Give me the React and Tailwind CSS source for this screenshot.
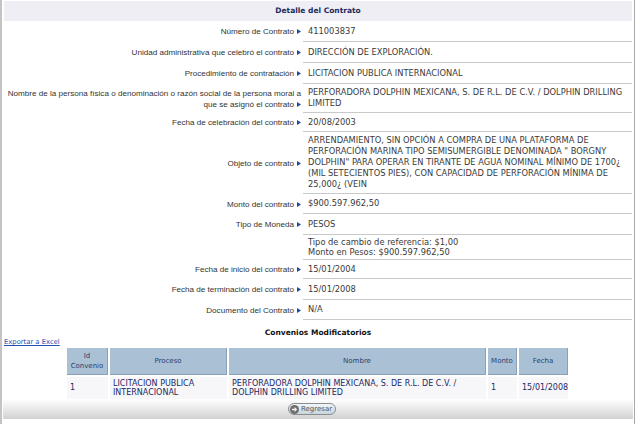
import React from "react";

const Arrow = () => (
  <svg width="4" height="5" viewBox="0 0 4 5" className="inline-block ml-[3px] align-[0px]">
    <path d="M0 0 L4 2.5 L0 5 Z" fill="#1f4a9a" />
  </svg>
);

const rows = [
  { h: "h-[21px]", label: ["Número de Contrato"], value: ["411003837"] },
  { h: "h-[21px]", label: ["Unidad administrativa que celebró el contrato"], value: ["DIRECCIÓN DE EXPLORACIÓN."] },
  { h: "h-[21px]", label: ["Procedimiento de contratación"], value: ["LICITACION PUBLICA INTERNACIONAL"] },
  {
    h: "h-[29px]",
    label: [
      "Nombre de la persona física o denominación o razón social de la persona moral a",
      "que se asignó el contrato",
    ],
    value: ["PERFORADORA DOLPHIN MEXICANA, S. DE R.L. DE C.V. / DOLPHIN DRILLING", "LIMITED"],
  },
  { h: "h-[19px]", label: ["Fecha de celebración del contrato"], value: ["20/08/2003"] },
  {
    h: "h-[62px]",
    label: ["Objeto de contrato"],
    value: [
      "ARRENDAMIENTO, SIN OPCIÓN A COMPRA DE UNA PLATAFORMA DE",
      "PERFORACIÓN MARINA TIPO SEMISUMERGIBLE DENOMINADA \" BORGNY",
      "DOLPHIN\" PARA OPERAR EN TIRANTE DE AGUA NOMINAL MÍNIMO DE 1700¿",
      "(MIL SETECIENTOS PIES), CON CAPACIDAD DE PERFORACIÓN MÍNIMA DE",
      "25,000¿ (VEIN",
    ],
  },
  { h: "h-[20px]", label: ["Monto del contrato"], value: ["$900.597.962,50"] },
  { h: "h-[21px]", label: ["Tipo de Moneda"], value: ["PESOS"] },
  {
    h: "h-[25px]",
    label: null,
    value: ["Tipo de cambio de referencia: $1,00", "Monto en Pesos: $900.597.962,50"],
    tight: true,
  },
  { h: "h-[19px]", label: ["Fecha de inicio del contrato"], value: ["15/01/2004"] },
  { h: "h-[21px]", label: ["Fecha de terminación del contrato"], value: ["15/01/2008"] },
  { h: "h-[20px]", label: ["Documento del Contrato"], value: ["N/A"] },
];

const headers = [["Id", "Convenio"], ["Proceso"], ["Nombre"], ["Monto"], ["Fecha"]];
const data = [
  ["1"],
  ["LICITACION PUBLICA", "INTERNACIONAL"],
  ["PERFORADORA DOLPHIN MEXICANA, S. DE R.L. DE C.V. /", "DOLPHIN DRILLING LIMITED"],
  ["1"],
  ["15/01/2008"],
];

export default function App() {
  return (
    <div className="w-[640px] h-[424px] bg-white overflow-hidden">
      <div className="w-[635px] h-[424px] border-l-2 border-l-[#c4c4c4] border-r border-r-[#a9a9a9] flex flex-col">
        <div className="mx-[2px] mt-[1px] h-[20px] bg-[#efeef5] flex items-center justify-center text-[7.5px] font-bold text-[#1b2a5c] [font-family:'DejaVu_Sans',sans-serif]">
          Detalle del Contrato
        </div>
        <div className="grid grid-cols-[299px_329px] gap-x-[2px]">
          {rows.map((r, i) => (
            <React.Fragment key={i}>
              <div className="flex flex-col items-end justify-center text-right whitespace-nowrap text-[8.1px] leading-[11px] text-[#333] [font-family:'Liberation_Sans',Arial,sans-serif]">
                {r.label &&
                  r.label.map((l, j) => (
                    <div key={j}>
                      {l}
                      {j === r.label.length - 1 && <Arrow />}
                    </div>
                  ))}
              </div>
              <div
                className={
                  r.h +
                  " pl-[5px] overflow-hidden border-b border-[#c9c9c9] flex flex-col justify-center whitespace-nowrap text-[8.3px] text-[#3a3a3a] [font-family:'DejaVu_Sans',Verdana,sans-serif] " +
                  (r.tight ? "leading-[10px]" : "leading-[11px]")
                }
              >
                {r.value.map((v, j) => (
                  <div key={j}>{v}</div>
                ))}
              </div>
            </React.Fragment>
          ))}
        </div>
        <div className="mt-[8px] text-center text-[7.5px] leading-[10px] font-bold text-[#111] [font-family:'DejaVu_Sans',sans-serif]">
          Convenios Modificatorios
        </div>
        <div className="ml-[2px] text-[6.8px] leading-[9px] [font-family:'DejaVu_Sans',sans-serif]">
          <span className="text-[#1f4db0] underline">Exportar a Excel</span>
        </div>
        <div className="ml-[65px] mt-[1px] grid grid-cols-[41px_117px_257px_29px_49px] gap-x-[2px] gap-y-[2px] [font-family:'DejaVu_Sans',sans-serif]">
          {headers.map((h, i) => (
            <div
              key={i}
              className="h-[27px] bg-[#aac0d5] border-r border-b border-[#8ba0b6] flex flex-col items-center justify-center text-[7px] leading-[10px] text-[#2a3f6b]"
            >
              {h.map((t, j) => (
                <div key={j}>{t}</div>
              ))}
            </div>
          ))}
          {data.map((d, i) => (
            <div
              key={i}
              className="h-[22px] bg-[#f7f7fa] px-[3px] flex flex-col justify-center whitespace-nowrap text-[8px] leading-[9.5px] text-[#1c2864]"
            >
              {d.map((t, j) => (
                <div key={j}>{t}</div>
              ))}
            </div>
          ))}
        </div>
        <div className="mx-[1px] h-[20px] bg-gradient-to-b from-white to-[#d2d2d2] flex items-center justify-center">
          <div className="mr-[12px] h-[12px] rounded-full border border-[#8c8c8c] bg-gradient-to-b from-[#f2f6f9] to-[#c6d5de] pl-[1px] pr-[3px] flex items-center gap-[2px]">
            <svg width="9" height="9" viewBox="0 0 9 9">
              <circle cx="4.5" cy="4.5" r="4.5" fill="#6e6e6e" />
              <path d="M2 3.7 H4.6 V2.1 L7.2 4.5 L4.6 6.9 V5.3 H2 Z" fill="#f2f2f2" />
            </svg>
            <span className="text-[7px] leading-[9px] text-[#555] [font-family:'DejaVu_Sans',sans-serif]">Regresar</span>
          </div>
        </div>
      </div>
    </div>
  );
}
